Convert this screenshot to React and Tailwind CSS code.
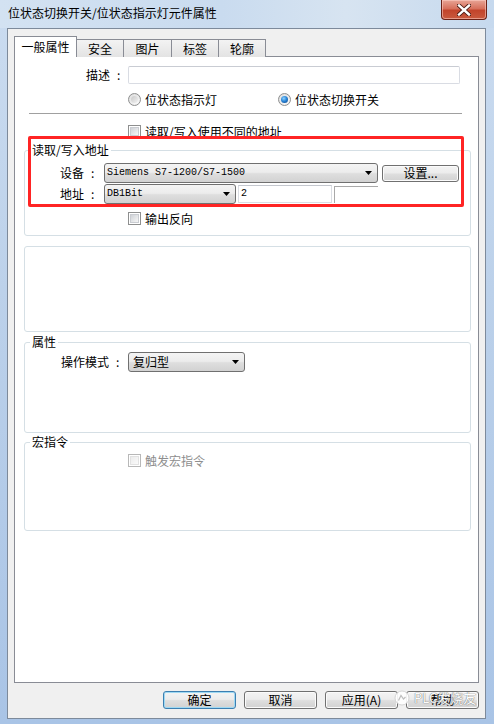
import React from "react";

const cjk = "font-['Noto_Sans_CJK_SC','Noto_Sans',sans-serif]";
const mono = "font-['Liberation_Mono',monospace] text-[10px]";
const btnFace =
  "bg-[linear-gradient(#f4f4f4_0%,#ececec_46%,#dedede_54%,#d2d2d2_100%)]";

function Arrow() {
  return (
    <svg width="7" height="4" viewBox="0 0 7 4" className="shrink-0">
      <path d="M0 0h7L3.5 4z" fill="#000" />
    </svg>
  );
}

function Combo({ className, children, textClass }) {
  return (
    <div
      className={`flex items-center justify-between rounded-[3px] border border-[#707070] ${btnFace} pl-[2px] pr-[5px] ${className}`}
    >
      <span className={textClass}>{children}</span>
      <Arrow />
    </div>
  );
}

function Button({ children, className, primary }) {
  return (
    <div
      className={`flex items-center justify-center rounded-[3px] border ${
        primary
          ? "border-[#3c7fb1] shadow-[inset_0_0_0_1px_#9fd9f3]"
          : "border-[#707070] shadow-[inset_0_0_0_1px_#fbfbfb]"
      } ${btnFace} ${className}`}
    >
      {children}
    </div>
  );
}

function Check({ disabled }) {
  return (
    <span
      className={`flex h-[13px] w-[13px] shrink-0 items-center justify-center border bg-white ${
        disabled ? "border-[#b8b8b8]" : "border-[#8e8f8f]"
      }`}
    >
      <span
        className={`h-[9px] w-[9px] border ${
          disabled
            ? "border-[#e2e2e2] bg-[linear-gradient(135deg,#ececec,#fafafa)]"
            : "border-[#c9ccd1] bg-[linear-gradient(135deg,#cfd2d7,#f6f6f6)]"
        }`}
      />
    </span>
  );
}

function Radio({ on }) {
  return (
    <span className="flex h-[13px] w-[13px] shrink-0 items-center justify-center rounded-full border border-[#8e8f8f] bg-[radial-gradient(circle_at_60%_65%,#ffffff,#d6d6d6)]">
      {on ? (
        <span className="h-[7px] w-[7px] rounded-full bg-[radial-gradient(circle_at_40%_35%,#8fd3ff_0%,#2a86d8_45%,#0b3f82_100%)]" />
      ) : (
        <span className="h-[7px] w-[7px] rounded-full bg-[linear-gradient(135deg,#c9c9c9,#f1f1f1)]" />
      )}
    </span>
  );
}

function Label({ className, children }) {
  return (
    <div className={`flex shrink-0 items-center ${className}`}>
      <span>{children}</span>
      <span className="ml-[7px]">:</span>
    </div>
  );
}

function Group({ title, className, children }) {
  return (
    <div
      className={`relative ml-[9px] mr-[7px] rounded-[3px] border border-[#d5dfe5] ${className}`}
    >
      {title && (
        <span className="absolute left-[5px] top-[-9px] bg-white px-[2px] leading-[16px]">
          {title}
        </span>
      )}
      {children}
    </div>
  );
}

function Tab({ children, className, active }) {
  return (
    <div
      className={
        active
          ? `flex h-[21px] items-start justify-center border-x border-t border-[#898c95] bg-white pt-[3px] ${className}`
          : `flex h-[18px] items-start justify-center border-r border-t border-[#898c95] bg-[linear-gradient(#f3f3f3,#e3e3e3)] pt-[2px] ${className}`
      }
    >
      {children}
    </div>
  );
}

export default function App() {
  return (
    <div
      className={`relative flex h-[724px] w-[494px] flex-col overflow-hidden bg-[linear-gradient(180deg,#cbdcf0_0%,#bcd1ea_40%,#a9c4e6_100%)] text-[12px] leading-[14px] text-black ${cjk}`}
    >
      {/* title bar */}
      <div className="flex h-[28px] shrink-0 items-start justify-between bg-[linear-gradient(90deg,#d3e2f2_0%,#c9dbef_45%,#d7e4f1_70%,#c6d9ee_100%)]">
        <span className="ml-[8px] mt-[6px] text-[12px] leading-[14px] text-black">
          位状态切换开关/位状态指示灯元件属性
        </span>
        <div className="mr-[7px] flex h-[20px] w-[46px] items-center justify-center rounded-b-[4px] border border-t-0 border-[#6b2217] bg-[linear-gradient(#e8a596_0%,#d7705c_45%,#c2442b_55%,#c95a3e_100%)] shadow-[inset_0_0_0_1px_rgba(255,210,200,0.55)]">
          <svg width="14" height="12" viewBox="0 0 14 12">
            <path
              d="M2 1.5l10 9M12 1.5l-10 9"
              stroke="#4a1a12"
              strokeWidth="4.2"
              strokeLinecap="square"
            />
            <path
              d="M2 1.5l10 9M12 1.5l-10 9"
              stroke="#ffffff"
              strokeWidth="2.4"
              strokeLinecap="square"
            />
          </svg>
        </div>
      </div>

      {/* client area */}
      <div className="ml-[7px] mr-[8px] flex h-[691px] shrink-0 flex-col border border-[#7d8a9b] bg-[#f0f0f0] pt-[7px]">
        {/* tab strip */}
        <div className="relative z-10 mb-[-1px] ml-[6px] flex h-[21px] items-end">
          <Tab active className="w-[63px]">一般属性</Tab>
          <Tab className="w-[47px]">安全</Tab>
          <Tab className="w-[48px]">图片</Tab>
          <Tab className="w-[47px]">标签</Tab>
          <Tab className="w-[47px]">轮廓</Tab>
        </div>

        {/* page */}
        <div className="relative mx-[6px] flex h-[627px] flex-col border border-[#898c95] bg-white pt-[9px]">
          {/* description */}
          <div className="flex h-[18px] items-center">
            <Label className="w-[113px] pl-[71px]">描述</Label>
            <div className="h-[18px] w-[332px] rounded-[2px] border border-[#d9dce3] border-t-[#c9ccd3] bg-white" />
          </div>

          {/* radios */}
          <div className="mt-[9px] flex h-[13px] items-center">
            <div className="ml-[113px] flex items-center">
              <Radio />
              <span className="ml-[4px]">位状态指示灯</span>
            </div>
            <div className="ml-[61px] flex items-center">
              <Radio on />
              <span className="ml-[4px]">位状态切换开关</span>
            </div>
          </div>

          <div className="ml-[14px] mr-[16px] mt-[7px] h-px bg-[#a0a0a0]" />

          <div className="ml-[113px] mt-[11px] flex h-[13px] items-center">
            <Check />
            <span className="ml-[4px]">读取/写入使用不同的地址</span>
          </div>

          {/* read / write address */}
          <Group title="读取/写入地址" className="mt-[12px] h-[86px] pt-[12px]">
            <div className="flex h-[20px] items-center">
              <Label className="w-[79px] pl-[35px]">设备</Label>
              <Combo className="h-[20px] w-[274px]" textClass={mono}>
                Siemens S7-1200/S7-1500
              </Combo>
              <Button className="ml-[4px] h-[17px] w-[77px]">设置...</Button>
            </div>
            <div className="mt-[1px] flex h-[20px] items-center">
              <Label className="w-[79px] pl-[35px]">地址</Label>
              <Combo className="h-[20px] w-[132px]" textClass={mono}>
                DB1Bit
              </Combo>
              <div className="ml-[2px] flex h-[18px] w-[94px] items-center border border-[#dadde3] border-t-[#c4c7ce] pl-[2px]">
                <span className={mono}>2</span>
              </div>
              <div className="ml-[2px] h-[17px] w-[44px] border-l border-t border-[#a9a9a9]" />
            </div>
            <div className="ml-[103px] mt-[8px] flex h-[13px] items-center">
              <Check />
              <span className="ml-[4px]">输出反向</span>
            </div>
          </Group>

          <Group className="mt-[10px] h-[86px]" />

          {/* properties */}
          <Group title="属性" className="mt-[10px] h-[91px] pt-[9px]">
            <div className="flex h-[20px] items-center">
              <Label className="w-[103px] pl-[36px]">操作模式</Label>
              <Combo className="h-[20px] w-[117px]" textClass="pl-[2px]">
                复归型
              </Combo>
            </div>
          </Group>

          {/* macro */}
          <Group title="宏指令" className="mt-[9px] h-[89px] pt-[11px]">
            <div className="ml-[103px] flex h-[13px] items-center">
              <Check disabled />
              <span className="ml-[4px] text-[#8d8d8d]">触发宏指令</span>
            </div>
          </Group>

          {/* highlight frame around the address section */}
          <div className="pointer-events-none absolute left-[13px] top-[79px] h-[71px] w-[436px] rounded-[2px] border-[3px] border-[#ff2424]" />
        </div>

        {/* dialog buttons */}
        <div className="mr-[6px] mt-[8px] flex justify-end gap-[8px]">
          <Button primary className="h-[18px] w-[73px]">确定</Button>
          <Button className="h-[18px] w-[73px]">取消</Button>
          <Button className="h-[18px] w-[73px]">应用(A)</Button>
          <Button className="h-[18px] w-[73px]">帮助</Button>
        </div>
      </div>

      {/* watermark */}
      <div className="pointer-events-none absolute left-[394px] top-[690px] flex items-center opacity-90">
        <svg width="16" height="16" viewBox="0 0 16 16">
          <circle cx="8" cy="8" r="7" fill="#ffffff" stroke="#c8c8c8" strokeWidth="0.8" />
          <path d="M4.5 10.5l2.5-5 2.5 3.5 2-2" stroke="#b9b9b9" strokeWidth="1.2" fill="none" />
        </svg>
        <span className="ml-[4px] text-[13px] leading-[16px] text-white [text-shadow:0_0_1px_#6b6b6b,0_0_1px_#6b6b6b]">
          PLC发烧友
        </span>
      </div>
    </div>
  );
}
